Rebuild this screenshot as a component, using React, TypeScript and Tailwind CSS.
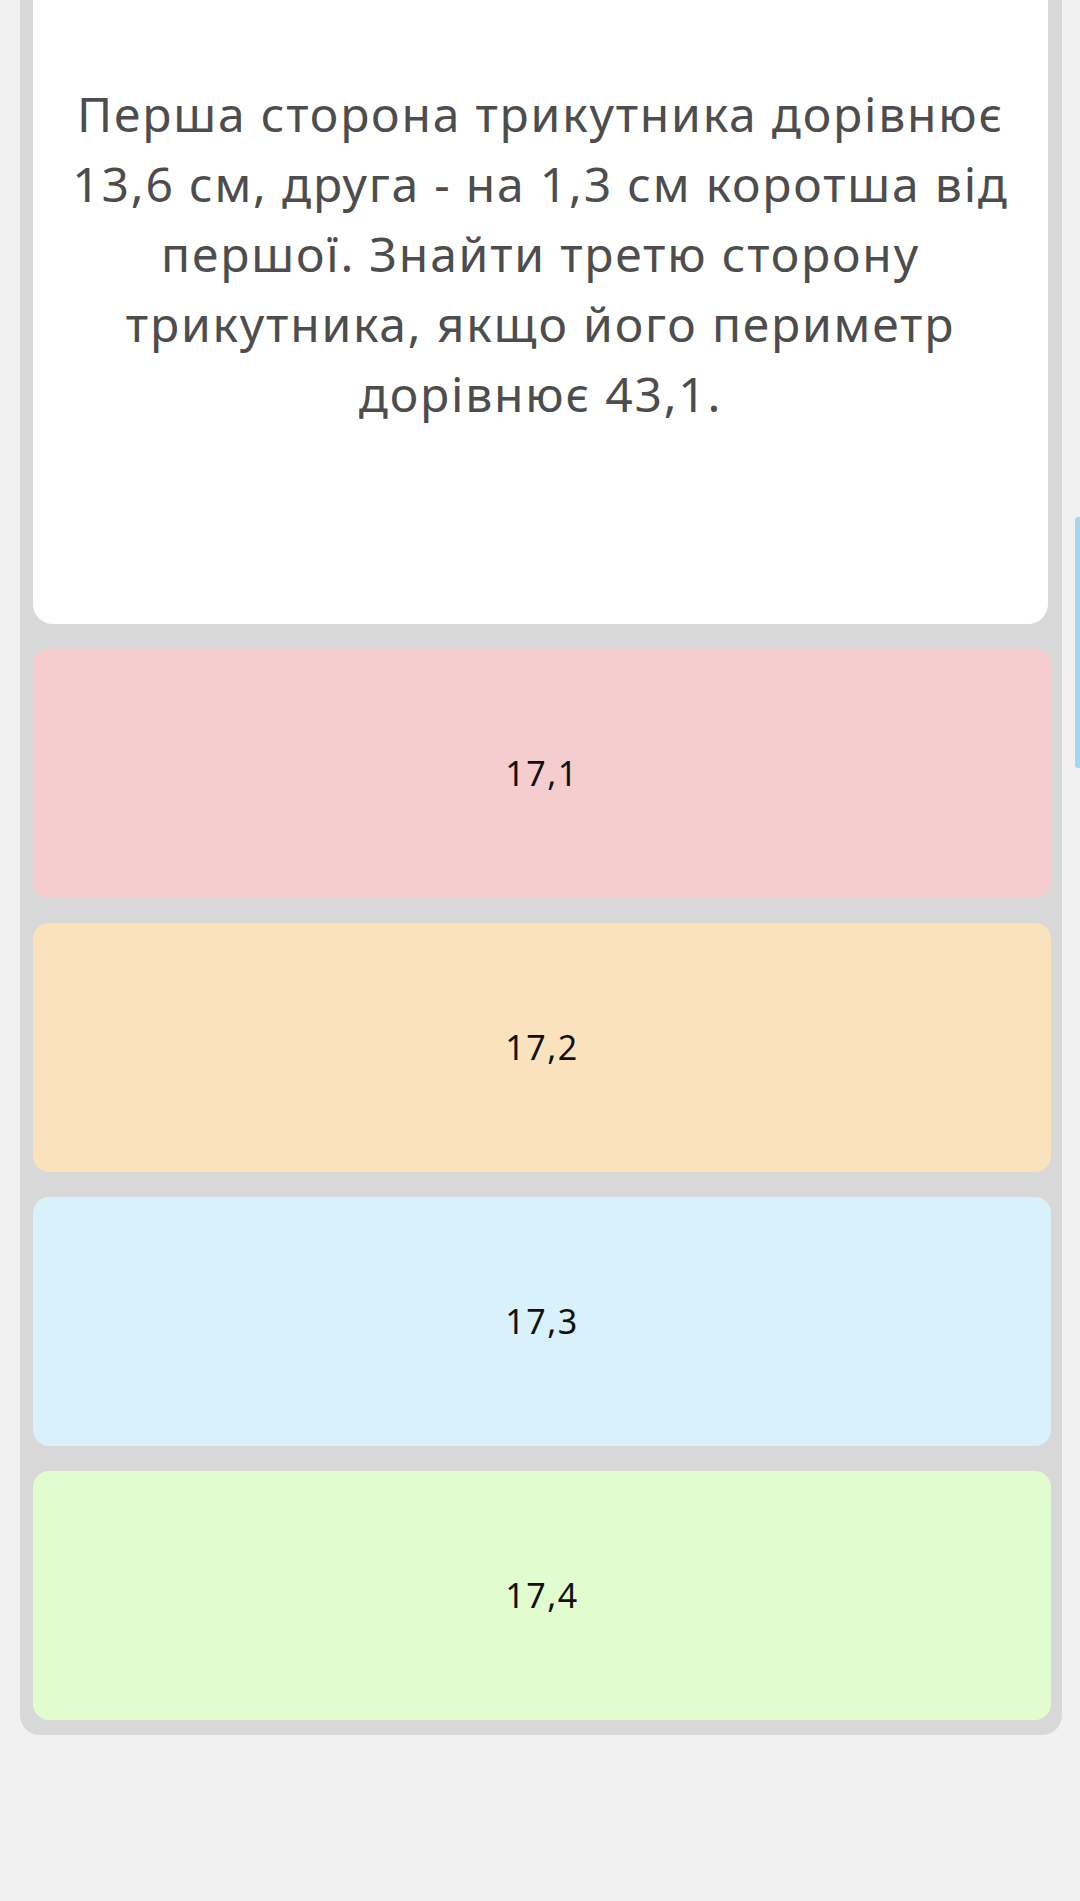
import React from "react";

const answers = [
  { label: "17,1", bg: "bg-[#f5cdcf]" },
  { label: "17,2", bg: "bg-[#fae2bd]" },
  { label: "17,3", bg: "bg-[#d9f1fb]" },
  { label: "17,4", bg: "bg-[#e1fdd0]" },
];

const lines = [
  "Перша сторона трикутника дорівнює",
  "13,6 см, друга - на 1,3 см коротша від",
  "першої. Знайти третю сторону",
  "трикутника, якщо його периметр",
  "дорівнює 43,1.",
];

export default function App() {
  return (
    <div className="relative min-h-[1901px] w-full bg-[#f1f1f1] font-['Noto_Sans',sans-serif]">
      <div className="ml-[20px] mr-[18px] flex flex-col gap-[25px] rounded-b-[20px] bg-[#d8d8d8] pl-[13px] pr-[11px] pb-[15px]">
        <div className="mr-[3px] h-[624px] rounded-b-[20px] bg-white pt-[79px] text-center text-[48px] leading-[70px] text-[#4d4d4d]">
          {lines.map((l, i) => (
            <div key={i} className="whitespace-nowrap tracking-[1.8px]">
              {l}
            </div>
          ))}
        </div>
        {answers.map((a) => (
          <button
            key={a.label}
            className={`flex h-[249px] items-center justify-center rounded-[16px] ${a.bg} text-[34px] tracking-[1.5px] text-[#111]`}
          >
            {a.label}
          </button>
        ))}
      </div>
      {/* scroll hint on the right edge */}
      <div className="absolute right-0 top-[517px] h-[251px] w-[5px] rounded-l-[3px] bg-[#a3d8ef]" />
    </div>
  );
}
